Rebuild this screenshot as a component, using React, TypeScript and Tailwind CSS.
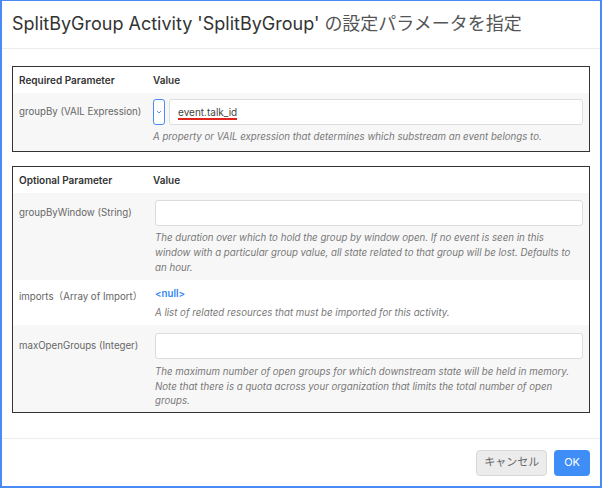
import React from "react";

const Desc = ({ children }: { children: React.ReactNode }) => (
  <div className="mt-[4px] pr-[10px] text-[9.7px] italic leading-[15px] text-[#777]">{children}</div>
);

const Input = ({ value }: { value?: string }) => (
  <div className="flex h-[26px] flex-1 items-center rounded-[3px] border border-[#dcdcdc] bg-white px-[8px] text-[10px] text-[#444]">
    {value ? (
      <span className="relative">
        {value}
        <span className="absolute left-0 right-0 top-[13px] h-[2px] bg-[#e0241b]" />
      </span>
    ) : null}
  </div>
);

export default function App() {
  return (
    <div
      className="flex h-[488px] w-[602px] flex-col border-x-2 border-t border-b-2 border-[#4a8af4] bg-white text-[#555]"
      style={{ fontFamily: "Inter, 'Noto Sans CJK JP', sans-serif" }}
    >
      <div className="flex h-[48px] shrink-0 items-center border-b border-[#ececec] pl-[10px] pb-[2px]">
        <span className="text-[18px] text-[#333]">
          SplitByGroup Activity 'SplitByGroup' <span className="text-[#555]">の設定パラメータを指定</span>
        </span>
      </div>
      <div className="flex-1 px-[10px] pt-[17px]">
        {/* Required */}
        <div className="border border-[#333]">
          <div className="flex h-[26px] items-center bg-white text-[10px] font-semibold text-[#333]">
            <div className="w-[140px] pl-[6px]">Required Parameter</div>
            <div>Value</div>
          </div>
          <div className="flex bg-[#f7f7f7] pb-[7px] pt-[6px]">
            <div className="w-[140px] pl-[6px] pt-[6px] text-[9.7px] text-[#666]">groupBy (VAIL Expression)</div>
            <div className="flex-1 pr-[6px]">
              <div className="flex gap-[4px]">
                <div className="flex h-[26px] w-[12px] items-center justify-center rounded-[3px] border border-[#4a8af4] bg-white">
                  <svg width="6" height="4" viewBox="0 0 6 4">
                    <path d="M1 1 L3 3 L5 1" stroke="#4a8af4" strokeWidth="0.9" fill="none" />
                  </svg>
                </div>
                <Input value="event.talk_id" />
              </div>
              <Desc>A property or VAIL expression that determines which substream an event belongs to.</Desc>
            </div>
          </div>
        </div>

        {/* Optional */}
        <div className="mt-[14px] border border-[#333]">
          <div className="flex h-[26px] items-center bg-white text-[10px] font-semibold text-[#333]">
            <div className="w-[140px] pl-[6px]">Optional Parameter</div>
            <div>Value</div>
          </div>
          <div className="flex bg-[#f7f7f7] pb-[5px] pt-[7px]">
            <div className="w-[140px] pl-[6px] pt-[6px] text-[9.7px] text-[#666]">groupByWindow (String)</div>
            <div className="flex-1 pl-[2px] pr-[6px]">
              <div className="flex">
                <Input />
              </div>
              <Desc>
                The duration over which to hold the group by window open. If no event is seen in this window with a
                particular group value, all state related to that group will be lost. Defaults to an hour.
              </Desc>
            </div>
          </div>
          <div className="flex bg-white pb-[5px] pt-[7px]">
            <div className="w-[140px] pl-[6px] pt-[3px] text-[9.7px] text-[#666]">imports（Array of Import）</div>
            <div className="flex-1 pl-[2px] pr-[6px]">
              <div className="text-[9.7px] font-semibold leading-[14px] text-[#2f86f6]">&lt;null&gt;</div>
              <Desc>A list of related resources that must be imported for this activity.</Desc>
            </div>
          </div>
          <div className="flex bg-[#f7f7f7] pb-[3px] pt-[8px]">
            <div className="w-[140px] pl-[6px] pt-[6px] text-[9.7px] text-[#666]">maxOpenGroups (Integer)</div>
            <div className="flex-1 pl-[2px] pr-[6px]">
              <div className="flex">
                <Input />
              </div>
              <div className="mt-[6px] pr-[10px] text-[9.7px] italic leading-[14.5px] text-[#777]">
                The maximum number of open groups for which downstream state will be held in memory. Note that there is
                a quota across your organization that limits the total number of open groups.
              </div>
            </div>
          </div>
        </div>
      </div>
      <div className="flex h-[48px] shrink-0 items-center justify-end gap-[7px] border-t border-[#ececec] pr-[10px]">
        <button className="h-[26px] rounded-[4px] border border-[#d8d8d8] bg-[#ececec] px-[7px] text-[11px] text-[#666]">
          キャンセル
        </button>
        <button className="h-[26px] rounded-[4px] bg-[#3f8ef7] px-[10px] text-[11px] text-white">OK</button>
      </div>
    </div>
  );
}
